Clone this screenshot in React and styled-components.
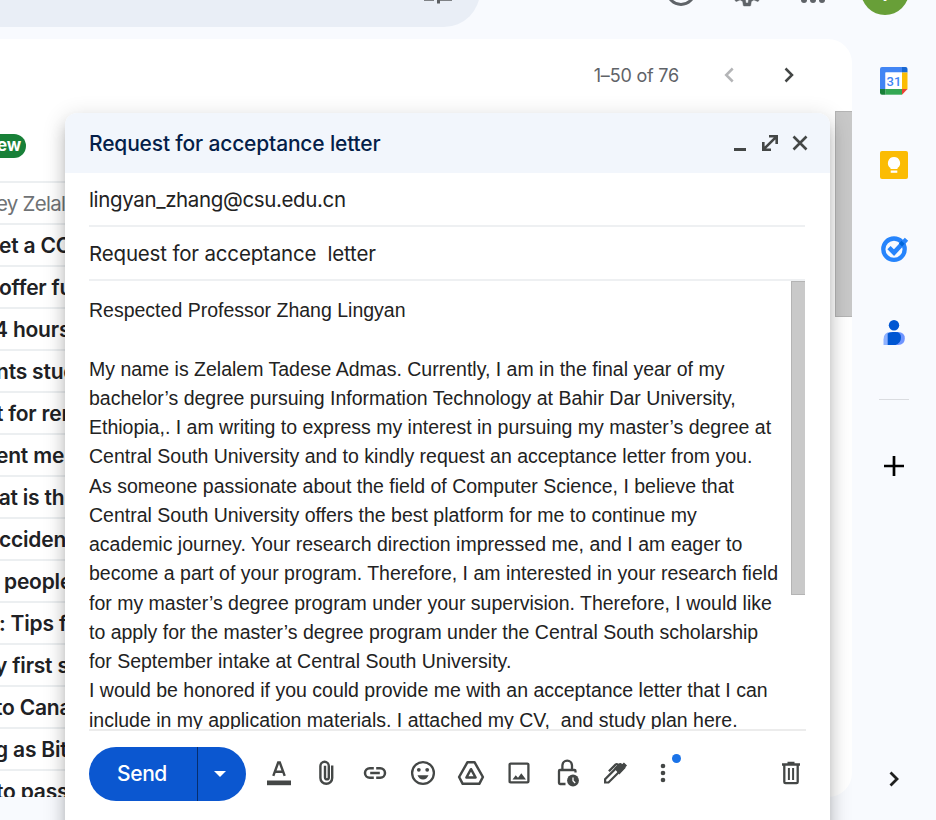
import React from "react";
import styled, { createGlobalStyle } from "styled-components";

const Global = createGlobalStyle`
  * { box-sizing: border-box; }
  body { margin: 0; overflow: hidden; background: #f8fafd; }
`;

const ui = `Inter, "Liberation Sans", sans-serif`;

const Page = styled.div`
  position: relative;
  display: grid;
  grid-template: 39px 781px / 852px 84px;
  width: 936px;
  height: 820px;
  overflow: hidden;
  background: #f8fafe;
  font-family: ${ui};
`;

const Header = styled.header`
  grid-column: 1 / -1;
  display: flex;
  overflow: hidden;
`;
const SearchBar = styled.div`
  width: 480px;
  height: 72px;
  margin-top: -45px;
  border-radius: 0 36px 36px 0;
  background: #e9eef6;
  display: flex;
  align-items: center;
  justify-content: flex-end;
  padding-right: 24px;
`;
const HeaderActions = styled.div`
  display: flex;
  align-items: center;
  height: 72px;
  margin-top: -45px;
  padding-left: 168px;
`;
const ActionSlot = styled.div`
  width: 66px;
  height: 36px;
  display: flex;
  justify-content: center;
`;
const Avatar = styled.div`
  width: 48px;
  height: 48px;
  margin-left: 15px;
  border-radius: 50%;
  background: #689f38;
  color: #fff;
  display: flex;
  align-items: center;
  justify-content: center;
  font-size: 28px;
`;

const MailPanel = styled.main`
  height: 758px;
  border-radius: 0 24px 24px 0;
  background: #fff;
  overflow: hidden;
  display: flex;
  flex-direction: column;
`;
const Pager = styled.div`
  flex: none;
  height: 72px;
  display: flex;
  align-items: center;
  justify-content: flex-end;
  padding-right: 45px;
  color: #5f6368;
`;
const Count = styled.span`
  font-size: 18px;
  letter-spacing: -0.2px;
  margin-right: 32px;
`;
const PagerButton = styled.span`
  display: flex;
  width: 36px;
  margin-left: ${(p) => p.$gap || 0}px;
  color: ${(p) => (p.$off ? "#b4b5b7" : "#444746")};
`;
const ListArea = styled.div`
  flex: 1;
  min-height: 0;
  display: flex;
  justify-content: space-between;
`;
const List = styled.div`
  width: 400px;
`;
const Row = styled.div`
  height: ${(p) => p.$h || 42}px;
  border-bottom: 2px solid #eceff1;
  display: flex;
  align-items: ${(p) => (p.$h ? "flex-end" : "center")};
  padding-bottom: ${(p) => (p.$h ? 23 : 0)}px;
  white-space: pre;
  font-size: ${(p) => (p.$light ? 20.5 : 21)}px;
  font-weight: ${(p) => (p.$light ? 400 : 600)};
  color: ${(p) => (p.$light ? "#6f7275" : "#202124")};
  letter-spacing: ${(p) => (p.$light ? -0.75 : -0.2)}px;
`;
const RowText = styled.span`
  margin-left: ${(p) => p.$shift || 0}px;
`;
const NewBadge = styled.span`
  height: 24px;
  width: 26px;
  border-radius: 0 12px 12px 0;
  background: #188038;
  color: #fff;
  font-size: 17px;
  font-weight: 700;
  line-height: 23px;
  text-indent: -3px;
`;
const PageThumb = styled.div`
  width: 17px;
  height: 206px;
  background: #c8c8c8;
  border: solid #b4b4b4;
  border-width: 1px 0 1px 1px;
`;

const SideBar = styled.aside`
  display: flex;
  flex-direction: column;
  align-items: center;
  padding-top: 24px;
`;
const AppSlot = styled.div`
  width: 36px;
  height: 36px;
  margin-bottom: 48px;
`;
const SideRule = styled.div`
  width: 30px;
  height: 1px;
  background: #dadce0;
`;
const PlusSlot = styled.div`
  width: 36px;
  height: 36px;
  margin-top: 48px;
`;
const ExpandSlot = styled.div`
  width: 36px;
  height: 36px;
  margin-top: 277px;
`;

const Compose = styled.section`
  position: absolute;
  left: 65px;
  top: 113px;
  width: 765px;
  height: 740px;
  border-radius: 12px 12px 0 0;
  background: #fff;
  box-shadow: 0 12px 15px 1px rgba(0, 0, 0, 0.14), 0 5px 21px 3px rgba(0, 0, 0, 0.12),
    0 8px 8px -5px rgba(0, 0, 0, 0.2);
`;
const TitleBar = styled.div`
  height: 60px;
  border-radius: 12px 12px 0 0;
  background: #f2f6fc;
  display: flex;
  align-items: center;
  justify-content: space-between;
  padding: 0 15px 0 24px;
`;
const Title = styled.h1`
  margin: 0;
  font-size: 21px;
  font-weight: 500;
  color: #041e49;
  letter-spacing: -0.17px;
`;
const WindowButtons = styled.div`
  display: flex;
  color: #444746;
`;
const Field = styled.div`
  height: 54px;
  margin: 0 25px 0 24px;
  border-bottom: 2px solid #eef0f2;
  display: flex;
  align-items: center;
  white-space: pre;
  font-size: 20.5px;
  color: #222;
  letter-spacing: ${(p) => p.$ls}px;
`;
const Body = styled.div`
  height: 448px;
  margin: 0 25px 0 24px;
  overflow: hidden;
  display: flex;
  justify-content: space-between;
`;
const Message = styled.div`
  padding-top: 15.15px;
  font-family: "Liberation Sans", Arial, sans-serif;
  font-size: 19.5px;
  color: #222;
`;
const Line = styled.div`
  height: 29.25px;
  line-height: 29.25px;
  white-space: pre;
`;
const BodyThumb = styled.div`
  flex: none;
  width: 14px;
  height: 314px;
  background: #c9c9c9;
  border: solid #b4b4b4;
  border-width: 1px 0 1px 1px;
`;
const Footer = styled.div`
  margin: 0 24px;
  height: 90px;
  border-top: 2px solid #ececec;
  display: flex;
  padding-top: 16px;
`;
const SendGroup = styled.div`
  display: flex;
  width: 157px;
  height: 54px;
  border-radius: 27px;
  overflow: hidden;
  background: #0b57d0;
  color: #fff;
`;
const SendLabel = styled.div`
  width: 109px;
  padding-right: 2px;
  border-right: 1px solid #062e6f;
  line-height: 53px;
  text-align: center;
  font-size: 21px;
  font-weight: 500;
  letter-spacing: -0.4px;
`;
const SendMore = styled.div`
  flex: 1;
  display: flex;
  align-items: center;
  padding-left: 16px;
`;
const Tools = styled.div`
  flex: 1;
  display: flex;
  align-items: center;
  height: 54px;
  margin-top: -1px;
  padding-left: 9px;
  color: #444746;
`;
const Tool = styled.div`
  position: relative;
  width: 48px;
  height: 36px;
  padding: 0 6px;
  margin-left: ${(p) => (p.$last ? "auto" : 0)};
  margin-right: ${(p) => (p.$last ? "-9px" : 0)};
`;
const Dot = styled.span`
  position: absolute;
  left: 33px;
  top: -1px;
  width: 9px;
  height: 9px;
  border-radius: 50%;
  background: #1a73e8;
`;

/* 36px drawing box by default; the centre is at 18,18 */
const Svg = styled.svg.attrs((p) => ({
  width: p.width ?? 36,
  height: p.height ?? 36,
  viewBox: p.viewBox ?? "0 0 36 36",
  fill: p.fill ?? "none",
  stroke: p.stroke ?? "currentColor",
  strokeWidth: p.strokeWidth ?? 2.3,
}))`
  display: block;
  flex: none;
`;

const GEAR =
  "M19.43 12.98c.04-.32.07-.64.07-.98s-.03-.66-.07-.98l2.11-1.65c.19-.15.24-.42.12-.64l-2-3.46c-.12-.22-.39-.3-.61-.22l-2.49 1c-.52-.4-1.08-.73-1.69-.98l-.38-2.65A.488.488 0 0 0 14 2h-4c-.25 0-.46.18-.49.42l-.38 2.65c-.61.25-1.17.59-1.69.98l-2.49-1c-.23-.09-.49 0-.61.22l-2 3.46c-.13.22-.07.49.12.64l2.11 1.65c-.04.32-.07.65-.07.98s.03.66.07.98l-2.11 1.65c-.19.15-.24.42-.12.64l2 3.46c.12.22.39.3.61.22l2.49-1c.52.4 1.08.73 1.69.98l.38 2.65c.03.24.24.42.49.42h4c.25 0 .46-.18.49-.42l.38-2.65c.61-.25 1.17-.59 1.69-.98l2.49 1c.23.09.49 0 .61-.22l2-3.46c.12-.22.07-.49-.12-.64l-2.11-1.65zm-1.98-1.71c.04.31.05.52.05.73s-.02.43-.05.73l-.14 1.13.89.7 1.08.84-.7 1.21-1.27-.51-1.04-.42-.9.68c-.43.32-.84.56-1.25.73l-1.06.43-.16 1.13-.2 1.35h-1.4l-.19-1.35-.16-1.13-1.06-.43c-.43-.18-.83-.41-1.23-.71l-.91-.7-1.06.43-1.27.51-.7-1.21 1.08-.84.89-.7-.14-1.13c-.03-.31-.05-.54-.05-.74s.02-.43.05-.73l.14-1.13-.89-.7-1.08-.84.7-1.21 1.27.51 1.04.42.9-.68c.43-.32.84-.56 1.25-.73l1.06-.43.16-1.13.2-1.35h1.39l.19 1.35.16 1.13 1.06.43c.43.18.83.41 1.23.71l.91.7 1.06-.43 1.27-.51.7 1.21-1.07.85-.89.7.14 1.13zM12 8a4 4 0 1 0 0 8 4 4 0 0 0 0-8z";

const TuneIcon = () => (
  <Svg color="#5c5f62" strokeWidth="3">
    <path d="M5 9h14M23 5v8M23 9h9M5 18h7M16 14v8M16 18h16M4 26.300h10M18.500 22v8.500M18.500 26.300h13.500" />
  </Svg>
);
const HelpIcon = () => (
  <Svg color="#5f6368" strokeWidth="3"><circle cx="18" cy="18" r="13.500" /></Svg>
);
const SettingsIcon = () => (
  <Svg stroke="#5f6368" strokeWidth="0.3" viewBox="0 0 24 24" fill="#5f6368"><path d={GEAR} /></Svg>
);
const AppsIcon = () => (
  <Svg stroke="none" fill="#5f6368">
    {[9, 18, 27].map((y) => [9, 18, 27].map((x) => <circle key={x + "-" + y} cx={x} cy={y} r="3" />))}
  </Svg>
);
const Chevron = ({ left, w = 2.5, color = "currentColor" }) => (
  <Svg stroke={color} strokeWidth={w}><path d={left ? "M21.700 11.500 15.200 18l6.500 6.500" : "M14.500 11.500 21 18l-6.500 6.500"} /></Svg>
);
const CalendarIcon = () => (
  <Svg stroke="none">
    <path d="M6 4h20.500v5.500h-17v17H4V6q0-2 2-2z" fill="#4285f4" />
    <path d="M26 4h3.500q2 0 2 2v3.500H26z" fill="#1967d2" />
    <path d="M26 9.500h5.500v17H26z" fill="#fbbc04" />
    <path d="M9.500 26H26v5.700H9.500z" fill="#34a853" />
    <path d="M4 26h5.500v5.700H6q-2 0-2-2z" fill="#188038" />
    <path d="M26 26h5.500v5.700H26z" fill="#f8fafe" />
    <path d="M26 26h5.500L26 31.700z" fill="#ea4335" />
    <path d="M9.500 9.500H26V26H9.500z" fill="#fff" />
    <text x="18" y="22.700" textAnchor="middle" fontFamily="Roboto" fontWeight="500" fontSize="13" fill="#4285f4">31</text>
  </Svg>
);
const KeepIcon = () => (
  <Svg stroke="none">
    <rect x="4" y="4" width="28" height="28" rx="2" fill="#fbbc04" />
    <path d="M18 10a6.100 6.100 0 0 0-3.500 11.100V22h7v-.9A6.100 6.100 0 0 0 18 10z" fill="#fff" />
    <path d="M14.700 23.500h6.600v2.300h-6.600z" fill="#fff" />
  </Svg>
);
const TasksIcon = () => (
  <Svg>
    <circle cx="18" cy="18.200" r="10.700" stroke="#2684fc" strokeWidth="4.300" />
    <path d="M13 16.700l5 4.900L30.500 8.200" stroke="#2684fc" strokeWidth="4.600" />
    <path d="M22.900 12.400l2.600-2.700 3.200 3.100-2.700 2.800z" fill="#0066da" stroke="none" />
  </Svg>
);
const ContactsIcon = () => (
  <Svg stroke="none">
    <circle cx="18" cy="10.300" r="5.200" fill="#0056d2" />
    <path d="M7.500 30v-5.500Q7.500 17 14.500 17H18v13z" fill="#8fb2ff" />
    <path d="M18 17h4q6.800 0 6.800 6.500T22 30h-6z" fill="#6f94ff" />
    <path d="M11.700 30V18.500Q13 17 17 17h2.500q5.500 0 5.500 5.500T19.500 30z" fill="#0056d2" />
  </Svg>
);

const TextIcon = () => (
  <Svg>
    <path d="M12.300 20.800 17.200 7.500h1.600l4.900 13.300M14 16.700h8" strokeWidth="2.400" />
    <path d="M6 25.500h24v4.700H6z" fill="currentColor" stroke="none" />
  </Svg>
);
const ClipIcon = () => (
  <Svg strokeWidth="2.400">
    <path transform="translate(-1 0)" d="M24.200 10.500v12.400a5.900 5.900 0 0 1-11.800 0V11a4.200 4.200 0 0 1 8.400 0v11.500a1.700 1.700 0 0 1-3.800 0V10.800" />
  </Svg>
);
const LinkIcon = () => (
  <Svg strokeWidth="2.500">
    <path d="M16.800 13.200h-4a4.800 4.800 0 0 0 0 9.600h4M19.200 13.200h4a4.800 4.800 0 0 1 0 9.600h-4M13.200 18h9.600" />
  </Svg>
);
const EmojiIcon = () => (
  <Svg>
    <circle cx="18" cy="18" r="10.900" />
    <circle cx="13.800" cy="14.800" r="1.900" fill="currentColor" stroke="none" />
    <circle cx="22.200" cy="14.800" r="1.900" fill="currentColor" stroke="none" />
    <path d="M12.500 20.300h11q-1.700 4.200-5.500 4.200t-5.500-4.200z" fill="currentColor" stroke="none" />
  </Svg>
);
const DriveIcon = () => (
  <Svg strokeLinejoin="round" strokeWidth="2.500">
    <path d="M14.500 7.200h7L29.900 22l-3.600 6.800H9.700L6.100 22z" />
    <path d="M18 14.200l4.600 8.300h-9.200z" />
  </Svg>
);
const ImageIcon = () => (
  <Svg>
    <rect x="8.600" y="8.600" width="18.800" height="18.800" rx="1" />
    <path d="M11.500 24.500l3.200-4.300 2.300 2.500 3.300-4.500 4.700 6.300z" fill="currentColor" stroke="none" />
  </Svg>
);
const LockIcon = () => (
  <Svg>
    <path d="M16.500 29H11q-1 0-1-1V16q0-1 1-1h14.500q1 0 1 1v1.500M13.400 15v-4.500a4.800 4.800 0 0 1 9.600 0V15" />
    <circle cx="24" cy="25.500" r="5.900" fill="currentColor" stroke="none" />
    <path d="M24 22.500v3.300l2.200 2.200" stroke="#fff" strokeWidth="1.300" />
  </Svg>
);
const PenIcon = () => (
  <Svg strokeWidth="2.200">
    <path d="M8.100 27.500v-3.400L19.600 12.600l3.400 3.400L11.500 27.500z" />
    <path d="M18 13.200l4.200-4.200q1.200-1 2.300.2l.8.700 1.600-1.600 2.300 2.300-1.500 1.500.3.600-5.600 5.800z" fill="currentColor" stroke="currentColor" strokeWidth="1.200" />
    <path d="M11.900 16.200l6.600-6.600q1.200-1 2.400 0l.6.600" strokeWidth="2.300" />
  </Svg>
);
const MoreIcon = () => (
  <Svg stroke="none" fill="currentColor">
    <circle cx="18" cy="11" r="2.300" /><circle cx="18" cy="18" r="2.300" /><circle cx="18" cy="25" r="2.300" />
  </Svg>
);
const TrashIcon = () => (
  <Svg>
    <path d="M11.300 10v17q0 1.200 1.200 1.200h11q1.200 0 1.200-1.200V10" />
    <path d="M9 9.500h18M14.500 8h7" strokeWidth="2.400" />
    <path d="M15.900 13v12M20.100 13v12" strokeWidth="2" />
  </Svg>
);
const Win = styled(Svg).attrs({ width: 30, height: 30, viewBox: "0 0 30 30" })``;

const ROWS = [
  { t: "ey Zelalem", x: -4, light: true },
  { t: "et a COVID", x: -1 },
  { t: "offer full", x: -1 },
  { t: "4 hours", x: -6 },
  { t: "nts study", x: -4 },
  { t: "t for rent", x: -4 },
  { t: "ent me", x: -4 },
  { t: "hat is the", x: -14 },
  { t: "ccident", x: -1 },
  { t: "people", x: 4 },
  { t: ": Tips for", x: -1 },
  { t: "y first s", x: -5 },
  { t: "to Canada", x: -5 },
  { t: "g as Bitc", x: -5 },
  { t: "to pass", x: -4 },
];

const LINES = [
  "Respected Professor Zhang Lingyan",
  "",
  "My name is Zelalem Tadese Admas. Currently, I am in the final year of my",
  "bachelor’s degree pursuing Information Technology at Bahir Dar University,",
  "Ethiopia,. I am writing to express my interest in pursuing my master’s degree at",
  "Central South University and to kindly request an acceptance letter from you.",
  "As someone passionate about the field of Computer Science, I believe that",
  "Central South University offers the best platform for me to continue my",
  "academic journey. Your research direction impressed me, and I am eager to",
  "become a part of your program. Therefore, I am interested in your research field",
  "for my master’s degree program under your supervision. Therefore, I would like",
  "to apply for the master’s degree program under the Central South scholarship",
  "for September intake at Central South University.",
  "I would be honored if you could provide me with an acceptance letter that I can",
  "include in my application materials. I attached my CV,  and study plan here.",
];

export default function App() {
  return (
    <>
      <Global />
      <Page>
        <Header>
          <SearchBar><TuneIcon /></SearchBar>
          <HeaderActions>
            <ActionSlot><HelpIcon /></ActionSlot>
            <ActionSlot><SettingsIcon /></ActionSlot>
            <ActionSlot><AppsIcon /></ActionSlot>
            <Avatar>T</Avatar>
          </HeaderActions>
        </Header>

        <MailPanel>
          <Pager>
            <Count>1–50 of 76</Count>
            <PagerButton $off><Chevron left /></PagerButton>
            <PagerButton $gap={24}><Chevron /></PagerButton>
          </Pager>
          <ListArea>
            <List>
              <Row $h={72}><NewBadge>ew</NewBadge></Row>
              {ROWS.map((r) => (
                <Row key={r.t} $light={r.light}><RowText $shift={r.x}>{r.t}</RowText></Row>
              ))}
            </List>
            <PageThumb />
          </ListArea>
        </MailPanel>

        <SideBar>
          <AppSlot><CalendarIcon /></AppSlot>
          <AppSlot><KeepIcon /></AppSlot>
          <AppSlot><TasksIcon /></AppSlot>
          <AppSlot><ContactsIcon /></AppSlot>
          <SideRule />
          <PlusSlot>
            <Svg stroke="#000" strokeWidth="2.700"><path d="M18 8v20M8 18h20" /></Svg>
          </PlusSlot>
          <ExpandSlot><Chevron color="#1f1f1f" w={2.8} /></ExpandSlot>
        </SideBar>

        <Compose>
          <TitleBar>
            <Title>Request for acceptance letter</Title>
            <WindowButtons>
              <Win><path d="M9 21.500h12" strokeWidth="3" /></Win>
              <Win><path d="M9.300 20.700 20.700 9.300M14 8.300h7.700V16M16 21.700H8.300V14" strokeWidth="2.600" /></Win>
              <Win><path d="M8.500 8.500l13 13M21.500 8.500l-13 13" strokeWidth="2.600" /></Win>
            </WindowButtons>
          </TitleBar>
          <Field $ls={-0.36}>lingyan_zhang@csu.edu.cn</Field>
          <Field $ls={-0.17}>Request for acceptance  letter</Field>
          <Body>
            <Message>
              {LINES.map((t, i) => <Line key={i}>{t}</Line>)}
            </Message>
            <BodyThumb />
          </Body>
          <Footer>
            <SendGroup>
              <SendLabel>Send</SendLabel>
              <SendMore>
                <svg width="12" height="6" viewBox="0 0 12 6"><path d="M0 0h12L6 6z" fill="#fff" /></svg>
              </SendMore>
            </SendGroup>
            <Tools>
              <Tool><TextIcon /></Tool>
              <Tool><ClipIcon /></Tool>
              <Tool><LinkIcon /></Tool>
              <Tool><EmojiIcon /></Tool>
              <Tool><DriveIcon /></Tool>
              <Tool><ImageIcon /></Tool>
              <Tool><LockIcon /></Tool>
              <Tool><PenIcon /></Tool>
              <Tool><MoreIcon /><Dot /></Tool>
              <Tool $last><TrashIcon /></Tool>
            </Tools>
          </Footer>
        </Compose>
      </Page>
    </>
  );
}
